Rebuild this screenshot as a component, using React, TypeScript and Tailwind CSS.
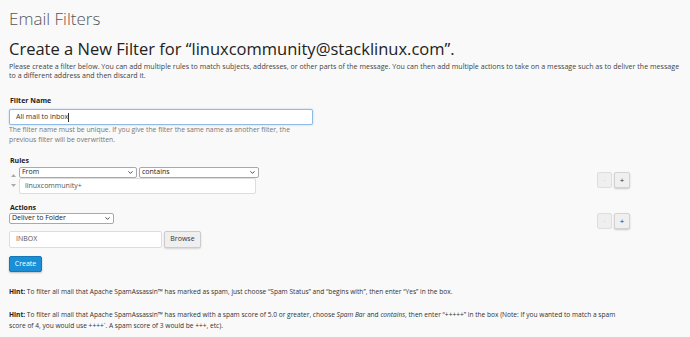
import { ChevronDown } from "lucide-react";

function Select({ value, className }: { value: string; className: string }) {
  return (
    <div className={`flex items-center justify-between bg-white border border-[#a9a9a9] rounded-[2px] px-[2px] h-[11px] text-[7px] text-[#222] ${className}`}>
      <span>{value}</span>
      <ChevronDown size={7} strokeWidth={3} className="text-[#333]" />
    </div>
  );
}

function PlusMinus() {
  return (
    <div className="flex gap-[2px]">
      <button className="w-[15px] h-[16px] bg-[#efefef] border border-[#dedede] rounded-[2px] text-[6px] text-[#bbb] leading-none">-</button>
      <button className="w-[16px] h-[16px] bg-[#efefef] border border-[#d3d3d3] rounded-[2px] shadow-[0_1px_2px_rgba(0,0,0,0.2)] text-[8px] text-[#333] leading-none">+</button>
    </div>
  );
}

export default function App() {
  return (
    <div className="w-[690px] h-[337px] bg-[#f9f9f9] overflow-hidden px-[9px] pt-[8px] text-[#333] font-['Open_Sans',sans-serif]">
      <h1 className="text-[17px] font-light text-[#555] leading-[22px]">Email Filters</h1>
      <h2 className="mt-[8px] text-[16.5px] leading-[22px] text-[#222]">Create a New Filter for “linuxcommunity@stacklinux.com”.</h2>
      <p className="mt-[2px] text-[7.1px] leading-[9px] text-[#444] w-[674px]">
        Please create a filter below. You can add multiple rules to match subjects, addresses, or other parts of the message. You can then add multiple actions to take on a message such as to deliver the message to a different address and then discard it.
      </p>

      <div className="mt-[16px] pl-[1px] text-[7px] font-bold text-[#222] leading-[10px]">Filter Name</div>
      <div className="mt-[3px] w-[304px] h-[16px] bg-white border border-[#8ebce6] rounded-[2px] shadow-[0_0_2px_rgba(102,175,233,0.6)] flex items-center px-[6px] text-[7px] text-[#333]">
        All mail to inbox<span className="w-px h-[9px] bg-[#333]" />
      </div>
      <p className="w-[290px] text-[6.8px] leading-[10px] text-[#777]">
        The filter name must be unique. If you give the filter the same name as another filter, the previous filter will be overwritten.
      </p>

      <div className="mt-[11px] flex items-start justify-between">
        <div>
          <div className="pl-[1px] text-[7px] font-bold text-[#222] leading-[10px]">Rules</div>
          <div className="mt-[1px] flex">
            <div className="w-[10px] flex flex-col items-start pl-[2px] pt-[7px] gap-[7px]">
              <svg width="5" height="3" viewBox="0 0 5 3"><path d="M0 3 L2.5 0 L5 3 Z" fill="#aaa" /></svg>
              <svg width="5" height="3" viewBox="0 0 5 3"><path d="M0 0 L2.5 3 L5 0 Z" fill="#aaa" /></svg>
            </div>
            <div>
              <div className="flex gap-[2px]">
                <Select value="From" className="w-[118px]" />
                <Select value="contains" className="w-[120px]" />
              </div>
              <div className="w-[237px] h-[16px] bg-white border border-[#ddd] rounded-[2px] flex items-center px-[5px] text-[7px] text-[#555]">
                linuxcommunity+
              </div>
            </div>
          </div>
        </div>
        <div className="mt-[16px] mr-[51px]">
          <PlusMinus />
        </div>
      </div>

      <div className="mt-[9px] flex items-start justify-between">
        <div>
          <div className="pl-[1px] text-[7px] font-bold text-[#222] leading-[10px]">Actions</div>
          <Select value="Deliver to Folder" className="w-[105px]" />
          <div className="mt-[7px] flex gap-[2px]">
            <div className="w-[153px] h-[17px] bg-white border border-[#ddd] rounded-[2px] flex items-center px-[6px] text-[7px] text-[#555]">INBOX</div>
            <button className="w-[37px] h-[17px] bg-[#efefef] border border-[#ccc] rounded-[2px] shadow-[0_1px_2px_rgba(0,0,0,0.15)] text-[7px] text-[#333]">Browse</button>
          </div>
          <button className="mt-[8px] w-[33px] h-[16px] bg-[#1a8fd6] border border-[#1679b6] rounded-[2px] shadow-[0_1px_2px_rgba(0,0,0,0.25)] text-[7px] text-white">Create</button>
        </div>
        <div className="mt-[10px] mr-[51px]">
          <PlusMinus />
        </div>
      </div>

      <p className="mt-[15px] text-[6.6px] leading-[9px] text-[#333]">
        <b className="text-[#222]">Hint:</b> To filter all mail that Apache SpamAssassin™ has marked as spam, just choose “Spam Status” and “begins with”, then enter “Yes” in the box.
      </p>
      <p className="mt-[13px] w-[618px] text-[6.6px] leading-[11px] text-[#333]">
        <b className="text-[#222]">Hint:</b> To filter all mail that Apache SpamAssassin™ has marked with a spam score of 5.0 or greater, choose <i>Spam Bar</i> and <i>contains</i>, then enter “+++++” in the box (Note: If you wanted to match a spam score of 4, you would use ++++`. A spam score of 3 would be +++, etc).
      </p>
    </div>
  );
}
